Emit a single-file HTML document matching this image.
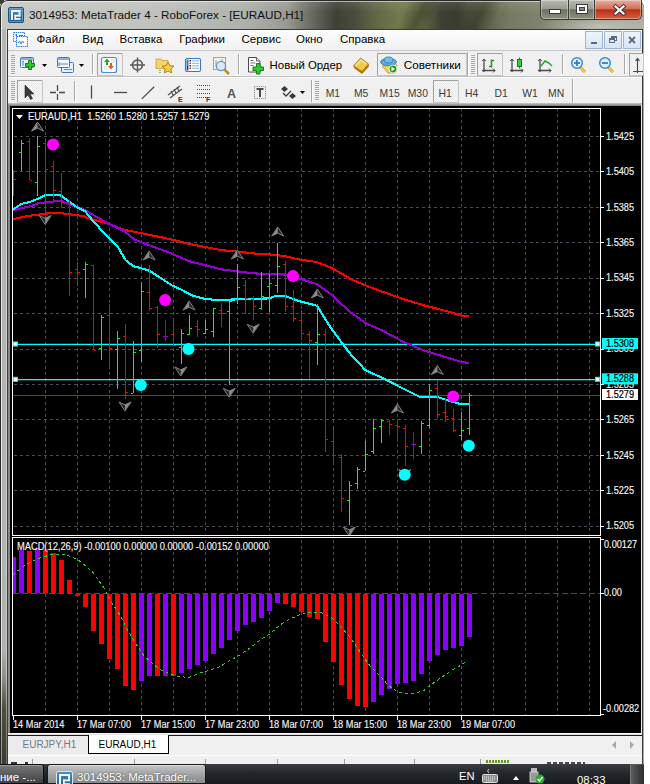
<!DOCTYPE html>
<html><head><meta charset="utf-8">
<style>
*{margin:0;padding:0;box-sizing:border-box}
html,body{width:650px;height:784px;overflow:hidden;background:#fff;font-family:"Liberation Sans",sans-serif}
.a{position:absolute}
#frame{left:0;top:0;width:644px;height:764px;border-radius:8px 8px 0 0;
 background:
  linear-gradient(rgba(255,255,255,.10),rgba(255,255,255,0) 12px),
  linear-gradient(115deg,rgba(0,0,0,0) 370px,rgba(20,22,14,.35) 385px,rgba(0,0,0,0) 398px,rgba(0,0,0,0) 425px,rgba(20,22,14,.3) 440px,rgba(0,0,0,0) 455px),
  radial-gradient(ellipse 60px 16px at 600px 26px, rgba(200,204,192,.85), rgba(200,204,192,0)),
  linear-gradient(90deg,#c6c8c4 0px,#c0c2be 150px,#b0b2ac 240px,#9a9c94 285px,#6a6c60 310px,#3e4036 335px,#484a3a 352px,#5e6444 372px,#727a4e 398px,#6a7048 418px,#3e4034 440px,#3a3c30 456px,#5a6044 482px,#767a62 508px,#80846e 540px,#8d9080 600px,#a9ac9c 644px);
 border-top:1px solid #2a2a2a;border-left:1px solid #2a2a2a}
#hl{left:1px;top:1px;width:642px;height:763px;border-radius:7px 7px 0 0;border-top:1px solid rgba(255,255,255,.55);border-left:1px solid rgba(255,255,255,.75)}
.title{left:29px;top:7.6px;font-size:11.7px;color:#101010;white-space:nowrap}
.menu{left:8px;top:30px;width:634px;height:20px;background:linear-gradient(#fcfcfc,#f1f1f1)}
.mi{position:absolute;top:2.6px;font-size:11.5px;color:#000;white-space:nowrap}
.tb{left:8px;width:634px;background:#f0f0f0}
.cap{position:absolute;top:0;height:20px;border:1px solid #383a36;border-top:none}
.mdib{position:absolute;top:31px;width:18px;height:18px;background:linear-gradient(#eef4fc,#d6e4f4);border:1px solid #9fb4cf}
</style></head><body>
<div id="frame" class="a"></div>
<div id="hl" class="a"></div>
<div class="a" style="left:0;top:0;width:4px;height:4px;background:radial-gradient(circle at 0 0,#3a4038 70%,transparent 72%)"></div>
<svg class="a" style="left:0;top:0" width="30" height="30">
 <defs><linearGradient id="ig" x1="0" y1="0" x2="0" y2="1"><stop offset="0" stop-color="#4a92c8"/><stop offset="1" stop-color="#1b5586"/></linearGradient></defs>
 <rect x="8.5" y="7.5" width="15" height="15" rx="1.5" fill="url(#ig)" stroke="#1f4f7a"/>
 <rect x="9.5" y="8.5" width="13" height="13" rx="1" fill="none" stroke="#6aa8d8" stroke-width="0.8"/>
 <g fill="#f4f8fb"><rect x="11" y="10" width="2" height="10"/><rect x="11" y="10" width="9.5" height="2"/><rect x="18.5" y="10" width="2" height="6.5"/><rect x="14.5" y="14.8" width="6" height="1.8"/><rect x="14.5" y="14.8" width="1.6" height="5"/><rect x="14.5" y="18" width="6" height="1.8"/></g>
</svg>
<div class="a title">3014953: MetaTrader 4 - RoboForex - [EURAUD,H1]</div>
<!-- caption buttons -->
<div class="cap" style="left:540px;width:29px;border-radius:0 0 0 5px;background:linear-gradient(#b6b9ae,#9a9d90 45%,#6c7062 52%,#8e937e);box-shadow:inset 0 0 0 1px rgba(255,255,255,.35)"></div>
<div class="a" style="left:549px;top:9px;width:12px;height:5px;background:#fff;border:1px solid #3a3a3a"></div>
<div class="cap" style="left:568px;width:27px;background:linear-gradient(#b6b9ae,#9a9d90 45%,#6c7062 52%,#8e937e);box-shadow:inset 0 0 0 1px rgba(255,255,255,.35)"></div>
<div class="a" style="left:576px;top:4px;width:12px;height:10px;border:1px solid #3a3a3a;background:#fff"></div>
<div class="a" style="left:579px;top:7px;width:6px;height:4px;border:1px solid #3a3a3a;background:#8a8a8a"></div>
<div class="cap" style="left:594px;width:48px;border-radius:0 0 5px 0;background:linear-gradient(#e4b0a4,#d27058 45%,#b83018 52%,#d86040);box-shadow:inset 0 0 0 1px rgba(255,255,255,.35)"></div>
<svg class="a" style="left:610px;top:3px" width="18" height="14"><path d="M5.5,3.5 L13.5,10.5 M13.5,3.5 L5.5,10.5" stroke="#3a3040" stroke-width="4" stroke-linecap="square"/><path d="M5.5,3.5 L13.5,10.5 M13.5,3.5 L5.5,10.5" stroke="#fff" stroke-width="2.2" stroke-linecap="square"/></svg>
<div class="a" style="left:1px;top:29px;width:6px;height:735px;background:linear-gradient(#b4b6b2 0,#b0b2ae 620px,#8a8d80 650px,#4a4e3a 680px,#3a3e2c 735px)"></div>
<div class="a" style="left:1px;top:29px;width:1px;height:735px;background:linear-gradient(#ececec 0,#e4e4e4 640px,#a0a298 700px,#8a8c80 735px)"></div>
<div class="a" style="left:6px;top:29px;width:1px;height:735px;background:linear-gradient(#dadada 0,#d0d0d0 640px,#8a8c80 700px,#707268 735px)"></div>
<!-- client border -->
<div class="a" style="left:7px;top:29px;width:636px;height:735px;border:1px solid #3a3a3a;border-bottom:none;background:#fff"></div>
<div class="a menu">
 <span class="mi" style="left:28.5px">Файл</span>
 <span class="mi" style="left:74.3px">Вид</span>
 <span class="mi" style="left:111.6px">Вставка</span>
 <span class="mi" style="left:171.3px">Графики</span>
 <span class="mi" style="left:233.5px">Сервис</span>
 <span class="mi" style="left:288px">Окно</span>
 <span class="mi" style="left:332px">Справка</span>
</div>
<svg class="a" style="left:10px;top:30px" width="20" height="20">
 <rect x="3.5" y="2.5" width="11" height="9" fill="#f4f8ff" stroke="#2f7ae6" stroke-dasharray="1.5,0.7"/>
 <rect x="6.5" y="6.5" width="11" height="10" fill="#fff" stroke="#2f7ae6" stroke-dasharray="1.5,0.7"/>
 <path d="M8,13 l1.5,-2 l1.5,3 l1.5,-3 l1.5,2" stroke="#2f7ae6" fill="none" stroke-width="1"/>
 <path d="M5,5.5 l1.5,-1.5 l0,3 M9,5.5 h4" stroke="#2f7ae6" stroke-width="1" fill="none"/>
</svg>
<div class="mdib" style="left:585px"></div><div class="a" style="left:591px;top:42px;width:6px;height:2px;background:#5a6a7e"></div>
<div class="mdib" style="left:604px"></div><div class="a" style="left:611px;top:36px;width:6px;height:5px;border:1px solid #5a6a7e;border-top-width:2px"></div><div class="a" style="left:609px;top:38px;width:6px;height:5px;border:1px solid #5a6a7e;border-top-width:2px;background:#dde8f5"></div>
<div class="mdib" style="left:623px"></div>
<svg class="a" style="left:623px;top:31px" width="18" height="18"><path d="M6,6 L12,12 M12,6 L6,12" stroke="#5a6a7e" stroke-width="1.8"/></svg>
<div class="a tb" style="top:50px;height:27px"></div>
<div class="a tb" style="top:77px;height:27px"></div>
<div class="a" style="left:8px;top:103px;width:634px;height:3px;background:linear-gradient(#c8c8c8,#7a7a7a)"></div>
<svg width="650" height="110" style="position:absolute;left:0;top:0"><rect x="8" y="50" width="634" height="1" fill="#c8c8c8"/><rect x="8" y="76" width="634" height="1" fill="#c0c0c0"/><rect x="8" y="77" width="634" height="1" fill="#fdfdfd"/><rect x="11" y="55" width="4" height="1" fill="#a9a9a9"/><rect x="11" y="57" width="4" height="1" fill="#a9a9a9"/><rect x="11" y="59" width="4" height="1" fill="#a9a9a9"/><rect x="11" y="61" width="4" height="1" fill="#a9a9a9"/><rect x="11" y="63" width="4" height="1" fill="#a9a9a9"/><rect x="11" y="65" width="4" height="1" fill="#a9a9a9"/><rect x="11" y="67" width="4" height="1" fill="#a9a9a9"/><rect x="11" y="69" width="4" height="1" fill="#a9a9a9"/><rect x="11" y="71" width="4" height="1" fill="#a9a9a9"/><rect x="11" y="73" width="4" height="1" fill="#a9a9a9"/><rect x="11" y="81" width="4" height="1" fill="#a9a9a9"/><rect x="11" y="83" width="4" height="1" fill="#a9a9a9"/><rect x="11" y="85" width="4" height="1" fill="#a9a9a9"/><rect x="11" y="87" width="4" height="1" fill="#a9a9a9"/><rect x="11" y="89" width="4" height="1" fill="#a9a9a9"/><rect x="11" y="91" width="4" height="1" fill="#a9a9a9"/><rect x="11" y="93" width="4" height="1" fill="#a9a9a9"/><rect x="11" y="95" width="4" height="1" fill="#a9a9a9"/><rect x="11" y="97" width="4" height="1" fill="#a9a9a9"/><rect x="11" y="99" width="4" height="1" fill="#a9a9a9"/><rect x="471" y="55" width="4" height="1" fill="#a9a9a9"/><rect x="471" y="57" width="4" height="1" fill="#a9a9a9"/><rect x="471" y="59" width="4" height="1" fill="#a9a9a9"/><rect x="471" y="61" width="4" height="1" fill="#a9a9a9"/><rect x="471" y="63" width="4" height="1" fill="#a9a9a9"/><rect x="471" y="65" width="4" height="1" fill="#a9a9a9"/><rect x="471" y="67" width="4" height="1" fill="#a9a9a9"/><rect x="471" y="69" width="4" height="1" fill="#a9a9a9"/><rect x="471" y="71" width="4" height="1" fill="#a9a9a9"/><rect x="471" y="73" width="4" height="1" fill="#a9a9a9"/><rect x="315" y="81" width="4" height="1" fill="#a9a9a9"/><rect x="315" y="83" width="4" height="1" fill="#a9a9a9"/><rect x="315" y="85" width="4" height="1" fill="#a9a9a9"/><rect x="315" y="87" width="4" height="1" fill="#a9a9a9"/><rect x="315" y="89" width="4" height="1" fill="#a9a9a9"/><rect x="315" y="91" width="4" height="1" fill="#a9a9a9"/><rect x="315" y="93" width="4" height="1" fill="#a9a9a9"/><rect x="315" y="95" width="4" height="1" fill="#a9a9a9"/><rect x="315" y="97" width="4" height="1" fill="#a9a9a9"/><rect x="315" y="99" width="4" height="1" fill="#a9a9a9"/><rect x="92" y="54" width="1" height="20" fill="#a6a6a6"/><rect x="93" y="54" width="1" height="20" fill="#fff"/><rect x="238" y="54" width="1" height="20" fill="#a6a6a6"/><rect x="239" y="54" width="1" height="20" fill="#fff"/><rect x="562" y="54" width="1" height="20" fill="#a6a6a6"/><rect x="563" y="54" width="1" height="20" fill="#fff"/><rect x="624" y="54" width="1" height="20" fill="#a6a6a6"/><rect x="625" y="54" width="1" height="20" fill="#fff"/><rect x="74" y="81" width="1" height="20" fill="#a6a6a6"/><rect x="75" y="81" width="1" height="20" fill="#fff"/><rect x="311" y="80" width="1" height="22" fill="#a6a6a6"/><rect x="312" y="80" width="1" height="22" fill="#fff"/><rect x="467" y="52" width="1" height="24" fill="#a6a6a6"/><rect x="468" y="52" width="1" height="24" fill="#fff"/><rect x="572" y="79" width="1" height="24" fill="#a6a6a6"/><rect x="573" y="79" width="1" height="24" fill="#fff"/><defs><pattern id="dith" width="2" height="2" patternUnits="userSpaceOnUse"><rect width="2" height="2" fill="#f8f8f8"/><rect width="1" height="1" fill="#e8e8e8"/><rect x="1" y="1" width="1" height="1" fill="#e8e8e8"/></pattern></defs><rect x="97.5" y="53.5" width="25" height="22" fill="url(#dith)" stroke="#c6c6c6"/><rect x="97" y="53" width="25" height="1" fill="#a0a0a0"/><rect x="97" y="53" width="1" height="22" fill="#a0a0a0"/><rect x="377.5" y="53.5" width="89" height="22" fill="url(#dith)" stroke="#c6c6c6"/><rect x="377" y="53" width="89" height="1" fill="#a0a0a0"/><rect x="377" y="53" width="1" height="22" fill="#a0a0a0"/><rect x="477.5" y="53.5" width="25" height="22" fill="url(#dith)" stroke="#c6c6c6"/><rect x="477" y="53" width="25" height="1" fill="#a0a0a0"/><rect x="477" y="53" width="1" height="22" fill="#a0a0a0"/><rect x="629.5" y="53.5" width="14" height="22" fill="url(#dith)" stroke="#c6c6c6"/><rect x="629" y="53" width="14" height="1" fill="#a0a0a0"/><rect x="629" y="53" width="1" height="22" fill="#a0a0a0"/><rect x="17.5" y="80.5" width="25" height="22" fill="url(#dith)" stroke="#c6c6c6"/><rect x="17" y="80" width="25" height="1" fill="#a0a0a0"/><rect x="17" y="80" width="1" height="22" fill="#a0a0a0"/><rect x="433.5" y="80.5" width="25" height="22" fill="url(#dith)" stroke="#c6c6c6"/><rect x="433" y="80" width="25" height="1" fill="#a0a0a0"/><rect x="433" y="80" width="1" height="22" fill="#a0a0a0"/><rect x="20.5" y="57.5" width="13" height="10" rx="1" fill="#eaf2fb" stroke="#3b78c0"/><rect x="21" y="58" width="12" height="2" fill="#7fb0e6"/><path d="M23,61 v5 M22,62 l1,-1 l1,1" stroke="#6a8aaa" fill="none"/><path d="M28.5,60.5 h3 v3 h3 v3 h-3 v3 h-3 v-3 h-3 v-3 h3 z" fill="#2fc42f" stroke="#138013" stroke-width="1"/><path d="M42,64 h5 l-2.5,3 z" fill="#000"/><rect x="61.5" y="62.5" width="12" height="10" rx="1" fill="#e6f0fa" stroke="#3b78c0"/><rect x="57.5" y="57.5" width="12" height="10" rx="1" fill="#f3f8fd" stroke="#3b78c0"/><rect x="58" y="58" width="11" height="2" fill="#7fb0e6"/><path d="M59,62 v4 M59,64 h9 M64,69.5 h8" stroke="#6a8aaa" fill="none"/><path d="M79,64 h5 l-2.5,3 z" fill="#000"/><rect x="101.5" y="57.5" width="15" height="15" rx="2" fill="#fff" stroke="#4a8ad8" stroke-width="1.2"/><path d="M104,62 l3,-3.5 l3,3.5 h-2 v3 h-2 v-3 z" fill="#21a821"/><path d="M108,66 l3,3.5 l3,-3.5 h-2 v-3 h-2 v3 z" fill="#e8552a"/><path d="M104,67 h3 M104,69 h3 M111,60 h4 M111,62 h4" stroke="#c0c8d8" stroke-width="0.8"/><circle cx="137.5" cy="65" r="5" fill="none" stroke="#5a5a5a" stroke-width="1.6"/><path d="M137.5,57.5 v15 M130,65 h15" stroke="#5a5a5a" stroke-width="1.4"/><path d="M156,59 h5 l1,1.5 h6 v8 h-12 z" fill="#f4d470" stroke="#c8a030" stroke-width="0.8"/><path d="M168,62 l1.8,3.6 4,.5 -2.9,2.8 .7,4 -3.6,-1.9 -3.6,1.9 .7,-4 -2.9,-2.8 4,-.5 z" fill="#f5cf3a" stroke="#a07820" stroke-width="0.9"/><path d="M160,70 v3" stroke="#555" stroke-dasharray="1,1"/><rect x="185.5" y="58.5" width="15" height="13" rx="1.5" fill="#fff" stroke="#3b78c0" stroke-width="1.1"/><rect x="186.5" y="59.5" width="2" height="11" fill="#3b78c0"/><rect x="187" y="66" width="1" height="4" fill="#1a3a6a"/><rect x="189.5" y="60" width="1.5" height="1.5" fill="#222"/><rect x="189.5" y="62.5" width="1.5" height="1.5" fill="#e02020"/><rect x="189.5" y="65" width="1.5" height="1.5" fill="#222"/><rect x="189.5" y="67.5" width="1.5" height="1.5" fill="#e02020"/><path d="M192,60.8 h7 M192,63.3 h7 M192,65.8 h7 M192,68.3 h7" stroke="#7aa6dc" stroke-width="0.9"/><rect x="213.5" y="57.5" width="12" height="12" fill="#f4f2ea" stroke="#a8a290"/><path d="M216,60 v7 M222,59 v6" stroke="#8a8a8a" stroke-width="0.8"/><path d="M224,69 l5,5" stroke="#b8901c" stroke-width="2.6"/><circle cx="221" cy="66" r="4.6" fill="#d6e8f6" fill-opacity="0.85" stroke="#5a9ad0" stroke-width="1.3"/><path d="M248.5,57.5 h8 l3.5,3.5 v11 h-11.5 z" fill="#fff" stroke="#4a4a4a"/><path d="M256.5,57.5 v3.5 h3.5" fill="#ddd" stroke="#4a4a4a" stroke-width="0.8"/><path d="M250.5,60.5 h3 M250.5,63 h5 M250.5,65.5 h3" stroke="#666" stroke-width="0.9"/><path d="M256.5,63.5 h3.5 v3.5 h3.5 v3.5 h-3.5 v3.5 h-3.5 v-3.5 h-3.5 v-3.5 h3.5 z" fill="#34c834" stroke="#128012" stroke-width="1"/><path d="M353.5,66 L354.5,68.5 L362,74 L369,66.5 L368.5,64 z" fill="#b07818"/><path d="M353.5,66 L360.5,58 L368.5,64 L362,71.5 z" fill="#f2c84a" stroke="#9a6a10" stroke-width="0.8"/><path d="M356,65.5 L361,60 L366,64" fill="none" stroke="#fae8a0" stroke-width="1.2"/><path d="M382,66 l6,7 h7 l2,-8 z" fill="#f0d060" stroke="#b09020" stroke-width="0.8"/><ellipse cx="388.5" cy="62" rx="8" ry="3.5" fill="#5ab0e0" stroke="#2a70a0" stroke-width="0.8"/><ellipse cx="388.5" cy="60" rx="4.5" ry="3" fill="#6cc0ee" stroke="#2a70a0" stroke-width="0.8"/><circle cx="393" cy="69" r="4" fill="#20a020" stroke="#fff" stroke-width="0.8"/><path d="M391.5,66.8 v4.4 l3.5,-2.2 z" fill="#fff"/><path d="M484,59 v13 M482,70.5 h13" stroke="#4a4a4a" stroke-width="1.3"/><path d="M482,61 l2,-2 l2,2 M493,68.5 l2,2 l-2,2" stroke="#4a4a4a" stroke-width="1" fill="none"/><path d="M491.5,59.5 v8 M489,66.5 h2.5 M492,60.5 h2" stroke="#1aa01a" stroke-width="1.6" fill="none"/><path d="M512,59 v13 M510,70.5 h13" stroke="#4a4a4a" stroke-width="1.3"/><path d="M510,61 l2,-2 l2,2 M521,68.5 l2,2 l-2,2" stroke="#4a4a4a" stroke-width="1" fill="none"/><path d="M519.5,57.5 v11" stroke="#1a801a"/><rect x="517.5" y="59.5" width="4" height="7" fill="#30d030" stroke="#108010"/><path d="M540,59 v13 M538,70.5 h13" stroke="#4a4a4a" stroke-width="1.3"/><path d="M538,61 l2,-2 l2,2 M549,68.5 l2,2 l-2,2" stroke="#4a4a4a" stroke-width="1" fill="none"/><path d="M541,66 l4,-5 l4,2 l3,3" stroke="#20a020" stroke-width="1.4" fill="none"/><path d="M580,67 l5,5" stroke="#c8a020" stroke-width="3"/><path d="M580,67 l5,5" stroke="#f0d860" stroke-width="1.2"/><circle cx="577" cy="63" r="5.3" fill="#dff0fb" stroke="#3a8ad0" stroke-width="1.5"/><path d="M574,63 h6" stroke="#3a7ac0" stroke-width="1.8"/><path d="M577,60 v6" stroke="#3a7ac0" stroke-width="1.8"/><path d="M608,67 l5,5" stroke="#c8a020" stroke-width="3"/><path d="M608,67 l5,5" stroke="#f0d860" stroke-width="1.2"/><circle cx="605" cy="63" r="5.3" fill="#dff0fb" stroke="#3a8ad0" stroke-width="1.5"/><path d="M602,63 h6" stroke="#3a7ac0" stroke-width="1.8"/><path d="M637.5,59 v14 M633,71.5 h10 M635.5,61 l2,-2.5 l2,2.5" stroke="#4a4a4a" stroke-width="1.2" fill="none"/><path d="M25,85 v13 l3,-3 l2.5,4.5 l2,-1 l-2.5,-4.5 h4 z" fill="#3a3a3a" stroke="#2a2a2a" stroke-width="0.6"/><path d="M57.5,85 v15 M50,92.5 h15" stroke="#4a4a4a" stroke-width="1.3"/><rect x="56" y="91" width="3" height="3" fill="#f0f0f0"/><path d="M91.5,85.5 v13" stroke="#4a4a4a" stroke-width="1.3"/><path d="M114,92.5 h13" stroke="#4a4a4a" stroke-width="1.3"/><path d="M141.8,98.9 L154.2,86.8" stroke="#4a4a4a" stroke-width="1.3"/><path d="M168,95 L180,86 M170,98 L182,89 M171,91 l2,4 M174,89 l2,4 M177,87 l2,4" stroke="#4a4a4a" stroke-width="1.1" fill="none"/><text x="178" y="101.5" font-family="Liberation Sans" font-weight="bold" font-size="7" fill="#333">E</text><path d="M197,85.5 h13 M197,89.5 h13 M197,93.5 h13 M197,97.5 h9" stroke="#4a4a4a" stroke-width="1" stroke-dasharray="1,1"/><text x="206" y="101.5" font-family="Liberation Sans" font-weight="bold" font-size="7" fill="#333">F</text><text x="227" y="97.5" font-family="Liberation Sans" font-weight="bold" font-size="12.5" fill="#555">A</text><rect x="254.5" y="86.5" width="11" height="12" fill="none" stroke="#6a6a6a" stroke-width="0.9" stroke-dasharray="1,1.2"/><path d="M256.5,89 h7 M260,89 v8" stroke="#4a4a4a" stroke-width="2"/><path d="M281,89 l3.5,-3 l3.5,3 l-3.5,3 z M289,96 l3.5,-3 l3.5,3 l-3.5,3 z" fill="#3a3a3a"/><path d="M283,93 l3,3 l5,-5" stroke="#3a3a3a" stroke-width="1.3" fill="none"/><path d="M300,91 h5 l-2.5,3 z" fill="#000"/><text x="269.6" y="68.8" font-family="Liberation Sans" font-size="11.4" fill="#000">Новый Ордер</text><text x="403.7" y="68.8" font-family="Liberation Sans" font-size="11.7" fill="#000">Советники</text><text transform="translate(325.7,96.9) scale(1,1)" font-family="Liberation Sans" font-size="10.4" fill="#3a3a3a">M1</text><text transform="translate(353.9,96.9) scale(1,1)" font-family="Liberation Sans" font-size="10.4" fill="#3a3a3a">M5</text><text transform="translate(379.5,96.9) scale(1,1)" font-family="Liberation Sans" font-size="10.4" fill="#3a3a3a">M15</text><text transform="translate(407.7,96.9) scale(1,1)" font-family="Liberation Sans" font-size="10.4" fill="#3a3a3a">M30</text><text transform="translate(438.59999999999997,96.9) scale(1,1)" font-family="Liberation Sans" font-size="10.4" fill="#3a3a3a">H1</text><text transform="translate(464.9,96.9) scale(1,1)" font-family="Liberation Sans" font-size="10.4" fill="#3a3a3a">H4</text><text transform="translate(494.5,96.9) scale(1,1)" font-family="Liberation Sans" font-size="10.4" fill="#3a3a3a">D1</text><text transform="translate(522.2,96.9) scale(1,1)" font-family="Liberation Sans" font-size="10.4" fill="#3a3a3a">W1</text><text transform="translate(548.0,96.9) scale(1,1)" font-family="Liberation Sans" font-size="10.4" fill="#3a3a3a">MN</text></svg>
<!-- tab bar -->
<div class="a" style="left:8px;top:733px;width:634px;height:2px;background:linear-gradient(#fff,#d8d8d8)"></div>
<div class="a" style="left:8px;top:735px;width:634px;height:20px;background:#f0f0f0"></div>
<div class="a" style="left:8px;top:735px;width:81px;height:19px;background:#ebebeb"></div>
<div class="a" style="left:22.5px;top:739px;font-size:10px;color:#6b7b8c">EURJPY,H1</div>
<div class="a" style="left:88px;top:735px;width:81px;height:19px;background:#fff;border:1px solid #000;border-top:none"></div>
<div class="a" style="left:98.5px;top:739px;font-size:10px;color:#000">EURAUD,H1</div>
<div class="a" style="left:168px;top:735px;width:474px;height:1px;background:#1a1a1a"></div><div class="a" style="left:8px;top:735px;width:80px;height:1px;background:#1a1a1a"></div>
<div class="a" style="left:612px;top:741px;width:0;height:0;border-top:4px solid transparent;border-bottom:4px solid transparent;border-right:4px solid #a8a8a8"></div>
<div class="a" style="left:630px;top:741px;width:0;height:0;border-top:4px solid transparent;border-bottom:4px solid transparent;border-left:4px solid #a8a8a8"></div>
<div class="a" style="left:8px;top:755px;width:634px;height:9px;background:#efefef;border-top:1px solid #fff"></div>
<div class="a" style="left:32px;top:759px;width:1px;height:5px;background:#a0a0a0"></div><div class="a" style="left:134px;top:759px;width:1px;height:5px;background:#a0a0a0"></div><div class="a" style="left:205px;top:759px;width:1px;height:5px;background:#a0a0a0"></div><div class="a" style="left:277px;top:759px;width:1px;height:5px;background:#a0a0a0"></div><div class="a" style="left:344px;top:759px;width:1px;height:5px;background:#a0a0a0"></div><div class="a" style="left:414px;top:759px;width:1px;height:5px;background:#a0a0a0"></div><div class="a" style="left:480px;top:759px;width:1px;height:5px;background:#a0a0a0"></div><div class="a" style="left:11px;top:762px;width:6px;height:2px;background:#333"></div><div class="a" style="left:25px;top:762px;width:3px;height:2px;background:#333"></div>
<div class="a" style="left:486px;top:760px;width:23px;height:3px;background:repeating-linear-gradient(90deg,#6a9a20 0 2px,transparent 2px 3px)"></div>
<div class="a" style="left:547px;top:762px;width:38px;height:2px;background:repeating-linear-gradient(90deg,#222 0 4px,transparent 4px 6px);opacity:.8"></div>
<!-- taskbar -->
<div class="a" style="left:0;top:764px;width:644px;height:20px;background:linear-gradient(#3a3e42,#24282c 45%,#181b1e)"></div>
<div class="a" style="left:0;top:764px;width:44px;height:20px;border:1px solid #0e0e0e;border-left:none;border-radius:0 3px 0 0;background:linear-gradient(#77797b,#5a5c5e 50%,#404244);box-shadow:inset 0 1px 0 rgba(255,255,255,.25)"></div>
<div class="a" style="left:0;top:770.5px;font-size:11.5px;color:#fff;white-space:nowrap">ние -...</div>
<div class="a" style="left:47px;top:764px;width:159px;height:20px;border:1px solid #1a1a1a;border-radius:3px 3px 0 0;background:linear-gradient(#c4c6c8,#a2a4a6 50%,#8a8c8e);box-shadow:inset 0 1px 0 rgba(255,255,255,.45)"></div>
<svg class="a" style="left:55px;top:770px" width="20" height="17">
 <rect x="1.5" y="1.5" width="16" height="16" rx="1.5" fill="url(#ig)" stroke="#d8e8f4"/>
 <g fill="#f4f8fb"><rect x="4" y="4" width="2" height="11"/><rect x="4" y="4" width="11" height="2"/><rect x="13" y="4" width="2" height="7"/><rect x="8" y="9.5" width="7" height="1.8"/><rect x="8" y="9.5" width="1.8" height="5.5"/><rect x="8" y="13.2" width="7" height="1.8"/></g>
</svg>
<div class="a" style="left:77px;top:771px;font-size:11.5px;color:#fff;white-space:nowrap;text-shadow:0 0 2px #444">3014953: MetaTrader...</div>
<div class="a" style="left:459px;top:769.5px;font-size:11.2px;color:#fff">EN</div>
<svg class="a" style="left:480px;top:768px" width="20" height="16"><path d="M9,1 q-3,2 0,4" stroke="#ccc" fill="none"/><rect x="2.5" y="6.5" width="15" height="8" rx="1" fill="#8a8e92" stroke="#ddd"/><path d="M4,9 h12 M4,11 h12 M6,13 h8" stroke="#eee" stroke-dasharray="1,1"/></svg>
<div class="a" style="left:513px;top:776px;width:0;height:0;border-left:3.5px solid transparent;border-right:3.5px solid transparent;border-bottom:4px solid #fff"></div>
<svg class="a" style="left:528px;top:766px" width="20" height="18"><rect x="3" y="2" width="6" height="4" fill="#bbb"/><rect x="2" y="6" width="8" height="10" fill="#999" stroke="#ddd" stroke-width=".8"/><circle cx="12" cy="13" r="4.5" fill="#2caa2c"/><path d="M9.5,13 l2,2 l3,-4" stroke="#fff" stroke-width="1.3" fill="none"/></svg>
<div class="a" style="left:577px;top:773.5px;font-size:11.4px;color:#fff">08:33</div>
<div class="a" style="left:630px;top:764px;width:14px;height:20px;border-left:1px solid #777;border-top:1px solid #555;background:linear-gradient(90deg,#5a5d60,#2a2c2e)"></div>
<svg width="650" height="784" style="position:absolute;left:0;top:0"><rect x="8" y="106" width="2" height="627" fill="#8a8a8a"/><rect x="10" y="106" width="631" height="627" fill="#000"/><rect x="641" y="104" width="1" height="629" fill="#e8e8e8"/><g stroke="#47505a" stroke-width="1" stroke-dasharray="3,3" shape-rendering="crispEdges"><line x1="45.5" y1="108" x2="45.5" y2="535"/><line x1="45.5" y1="540" x2="45.5" y2="715"/><line x1="77.5" y1="108" x2="77.5" y2="535"/><line x1="77.5" y1="540" x2="77.5" y2="715"/><line x1="109.5" y1="108" x2="109.5" y2="535"/><line x1="109.5" y1="540" x2="109.5" y2="715"/><line x1="141.5" y1="108" x2="141.5" y2="535"/><line x1="141.5" y1="540" x2="141.5" y2="715"/><line x1="173.5" y1="108" x2="173.5" y2="535"/><line x1="173.5" y1="540" x2="173.5" y2="715"/><line x1="205.5" y1="108" x2="205.5" y2="535"/><line x1="205.5" y1="540" x2="205.5" y2="715"/><line x1="237.5" y1="108" x2="237.5" y2="535"/><line x1="237.5" y1="540" x2="237.5" y2="715"/><line x1="269.5" y1="108" x2="269.5" y2="535"/><line x1="269.5" y1="540" x2="269.5" y2="715"/><line x1="301.5" y1="108" x2="301.5" y2="535"/><line x1="301.5" y1="540" x2="301.5" y2="715"/><line x1="333.5" y1="108" x2="333.5" y2="535"/><line x1="333.5" y1="540" x2="333.5" y2="715"/><line x1="365.5" y1="108" x2="365.5" y2="535"/><line x1="365.5" y1="540" x2="365.5" y2="715"/><line x1="397.5" y1="108" x2="397.5" y2="535"/><line x1="397.5" y1="540" x2="397.5" y2="715"/><line x1="429.5" y1="108" x2="429.5" y2="535"/><line x1="429.5" y1="540" x2="429.5" y2="715"/><line x1="461.5" y1="108" x2="461.5" y2="535"/><line x1="461.5" y1="540" x2="461.5" y2="715"/><line x1="493.5" y1="108" x2="493.5" y2="535"/><line x1="493.5" y1="540" x2="493.5" y2="715"/><line x1="525.5" y1="108" x2="525.5" y2="535"/><line x1="525.5" y1="540" x2="525.5" y2="715"/><line x1="557.5" y1="108" x2="557.5" y2="535"/><line x1="557.5" y1="540" x2="557.5" y2="715"/><line x1="589.5" y1="108" x2="589.5" y2="535"/><line x1="589.5" y1="540" x2="589.5" y2="715"/><line x1="14" y1="136.5" x2="600" y2="136.5"/><line x1="14" y1="171.5" x2="600" y2="171.5"/><line x1="14" y1="207.5" x2="600" y2="207.5"/><line x1="14" y1="242.5" x2="600" y2="242.5"/><line x1="14" y1="278.5" x2="600" y2="278.5"/><line x1="14" y1="313.5" x2="600" y2="313.5"/><line x1="14" y1="349.5" x2="600" y2="349.5"/><line x1="14" y1="384.5" x2="600" y2="384.5"/><line x1="14" y1="419.5" x2="600" y2="419.5"/><line x1="14" y1="455.5" x2="600" y2="455.5"/><line x1="14" y1="490.5" x2="600" y2="490.5"/><line x1="14" y1="526.5" x2="600" y2="526.5"/></g><line x1="13" y1="395.5" x2="600" y2="395.5" stroke="#474d55" stroke-width="1" shape-rendering="crispEdges"/><line x1="13" y1="344.3" x2="600" y2="344.3" stroke="#00ffff" stroke-width="1.35"/><rect x="13.5" y="342.0" width="4" height="4" fill="#fff" stroke="#00ffff" stroke-width="1"/><rect x="595.5" y="342.0" width="4" height="4" fill="#fff" stroke="#00ffff" stroke-width="1"/><line x1="13" y1="379.6" x2="600" y2="379.6" stroke="#00ffff" stroke-width="1.35"/><rect x="13.5" y="377.3" width="4" height="4" fill="#fff" stroke="#00ffff" stroke-width="1"/><rect x="595.5" y="377.3" width="4" height="4" fill="#fff" stroke="#00ffff" stroke-width="1"/><polyline points="13.0,219.2 21.5,217.2 29.9,215.7 45.2,213.7 55.9,212.6 69.4,214.3 83.0,216.0 90.6,219.0 105.9,222.9 124.2,229.8 140.0,232.9 170.0,239.1 189.1,243.9 204.4,246.8 221.6,250.2 236.9,251.6 254.1,253.5 269.1,254.4 284.4,256.0 297.8,259.2 316.9,262.1 330.3,267.4 340.0,272.6 350.8,279.1 365.8,285.5 383.1,292.0 404.6,299.5 426.2,306.0 447.7,311.4 461.7,315.7 469.2,315.7" fill="none" stroke="#ff0000" stroke-width="2.1" stroke-linejoin="round" shape-rendering="crispEdges"/><polyline points="13.0,210.4 21.5,208.1 29.9,206.5 37.5,203.5 45.2,202.4 60.5,200.8 69.4,204.5 83.0,209.0 93.6,215.3 109.0,223.7 124.2,231.3 135.0,239.8 150.0,245.5 170.0,252.9 189.1,261.1 204.4,265.0 221.6,269.4 236.9,271.3 254.1,273.4 284.4,274.5 301.6,279.3 316.9,284.1 330.3,293.7 340.0,302.8 350.8,312.5 365.8,323.2 383.1,330.8 404.6,342.6 426.2,351.2 447.7,357.7 461.7,362.0 469.2,363.1" fill="none" stroke="#9400d3" stroke-width="2.1" stroke-linejoin="round" shape-rendering="crispEdges"/><polyline points="13.0,209.6 21.5,203.9 29.9,201.9 37.5,198.9 45.2,195.0 60.5,195.3 69.6,201.9 77.3,207.5 85.2,211.4 92.1,219.8 105.9,235.2 118.1,247.4 125.8,260.4 133.5,266.3 141.2,268.2 149.8,271.0 160.3,277.7 171.8,285.4 181.5,289.8 192.9,295.6 204.4,298.8 215.9,300.0 236.9,299.4 254.1,298.8 269.1,298.4 274.9,296.1 286.3,296.5 299.7,301.3 316.9,305.7 330.3,327.1 341.6,342.4 351.2,354.9 365.5,370.2 378.0,375.9 390.0,381.7 400.0,387.0 419.1,396.6 437.3,397.0 445.9,399.8 459.3,403.7 469.2,404.2" fill="none" stroke="#00ffff" stroke-width="2.1" stroke-linejoin="round" shape-rendering="crispEdges"/><g shape-rendering="crispEdges" stroke-width="1"><line x1="13.5" y1="170" x2="13.5" y2="196" stroke="#ff0000"/><line x1="14" y1="179.5" x2="16" y2="179.5" stroke="#ff0000"/><line x1="21.5" y1="140" x2="21.5" y2="171" stroke="#00ff00"/><line x1="19" y1="152.5" x2="21" y2="152.5" stroke="#00ff00"/><line x1="22" y1="143.5" x2="24" y2="143.5" stroke="#00ff00"/><line x1="29.5" y1="138" x2="29.5" y2="180" stroke="#ff0000"/><line x1="27" y1="141.5" x2="29" y2="141.5" stroke="#ff0000"/><line x1="30" y1="180.5" x2="32" y2="180.5" stroke="#ff0000"/><line x1="37.5" y1="136" x2="37.5" y2="196" stroke="#00ff00"/><line x1="35" y1="182.5" x2="37" y2="182.5" stroke="#00ff00"/><line x1="38" y1="146.5" x2="40" y2="146.5" stroke="#00ff00"/><line x1="45.5" y1="141" x2="45.5" y2="213" stroke="#ff0000"/><line x1="43" y1="143.5" x2="45" y2="143.5" stroke="#ff0000"/><line x1="46" y1="169.5" x2="48" y2="169.5" stroke="#ff0000"/><line x1="53.5" y1="161" x2="53.5" y2="200" stroke="#ff0000"/><line x1="51" y1="166.5" x2="53" y2="166.5" stroke="#ff0000"/><line x1="54" y1="190.5" x2="56" y2="190.5" stroke="#ff0000"/><line x1="61.5" y1="173" x2="61.5" y2="208" stroke="#ff0000"/><line x1="59" y1="191.5" x2="61" y2="191.5" stroke="#ff0000"/><line x1="62" y1="202.5" x2="64" y2="202.5" stroke="#ff0000"/><line x1="69.5" y1="200" x2="69.5" y2="296" stroke="#ff0000"/><line x1="67" y1="202.5" x2="69" y2="202.5" stroke="#ff0000"/><line x1="70" y1="272.5" x2="72" y2="272.5" stroke="#ff0000"/><line x1="77.5" y1="262" x2="77.5" y2="286" stroke="#ff0000"/><line x1="75" y1="269.5" x2="77" y2="269.5" stroke="#ff0000"/><line x1="78" y1="272.5" x2="80" y2="272.5" stroke="#ff0000"/><line x1="85.5" y1="262" x2="85.5" y2="298" stroke="#00ff00"/><line x1="83" y1="269.5" x2="85" y2="269.5" stroke="#00ff00"/><line x1="86" y1="264.5" x2="88" y2="264.5" stroke="#00ff00"/><line x1="93.5" y1="265" x2="93.5" y2="350" stroke="#ff0000"/><line x1="91" y1="265.5" x2="93" y2="265.5" stroke="#ff0000"/><line x1="94" y1="350.5" x2="96" y2="350.5" stroke="#ff0000"/><line x1="101.5" y1="315" x2="101.5" y2="360" stroke="#00ff00"/><line x1="99" y1="348.5" x2="101" y2="348.5" stroke="#00ff00"/><line x1="102" y1="317.5" x2="104" y2="317.5" stroke="#00ff00"/><line x1="109.5" y1="304" x2="109.5" y2="367" stroke="#ff0000"/><line x1="107" y1="315.5" x2="109" y2="315.5" stroke="#ff0000"/><line x1="110" y1="348.5" x2="112" y2="348.5" stroke="#ff0000"/><line x1="117.5" y1="331" x2="117.5" y2="389" stroke="#00ff00"/><line x1="115" y1="349.5" x2="117" y2="349.5" stroke="#00ff00"/><line x1="118" y1="338.5" x2="120" y2="338.5" stroke="#00ff00"/><line x1="125.5" y1="324" x2="125.5" y2="399" stroke="#ff0000"/><line x1="123" y1="336.5" x2="125" y2="336.5" stroke="#ff0000"/><line x1="126" y1="392.5" x2="128" y2="392.5" stroke="#ff0000"/><line x1="133.5" y1="341" x2="133.5" y2="393" stroke="#00ff00"/><line x1="131" y1="393.5" x2="133" y2="393.5" stroke="#00ff00"/><line x1="134" y1="352.5" x2="136" y2="352.5" stroke="#00ff00"/><line x1="141.5" y1="282" x2="141.5" y2="362" stroke="#00ff00"/><line x1="139" y1="350.5" x2="141" y2="350.5" stroke="#00ff00"/><line x1="142" y1="291.5" x2="144" y2="291.5" stroke="#00ff00"/><line x1="149.5" y1="265" x2="149.5" y2="311" stroke="#ff0000"/><line x1="147" y1="292.5" x2="149" y2="292.5" stroke="#ff0000"/><line x1="150" y1="308.5" x2="152" y2="308.5" stroke="#ff0000"/><line x1="157.5" y1="306" x2="157.5" y2="348" stroke="#ff0000"/><line x1="155" y1="307.5" x2="157" y2="307.5" stroke="#ff0000"/><line x1="158" y1="334.5" x2="160" y2="334.5" stroke="#ff0000"/><line x1="165.5" y1="320" x2="165.5" y2="341" stroke="#9400d3"/><line x1="163" y1="336.5" x2="165" y2="336.5" stroke="#9400d3"/><line x1="166" y1="336.5" x2="168" y2="336.5" stroke="#9400d3"/><line x1="173.5" y1="320" x2="173.5" y2="346" stroke="#ff0000"/><line x1="171" y1="334.5" x2="173" y2="334.5" stroke="#ff0000"/><line x1="174" y1="345.5" x2="176" y2="345.5" stroke="#ff0000"/><line x1="181.5" y1="329" x2="181.5" y2="364" stroke="#00ff00"/><line x1="179" y1="347.5" x2="181" y2="347.5" stroke="#00ff00"/><line x1="182" y1="333.5" x2="184" y2="333.5" stroke="#00ff00"/><line x1="189.5" y1="315" x2="189.5" y2="335" stroke="#00ff00"/><line x1="187" y1="334.5" x2="189" y2="334.5" stroke="#00ff00"/><line x1="190" y1="328.5" x2="192" y2="328.5" stroke="#00ff00"/><line x1="197.5" y1="320" x2="197.5" y2="337" stroke="#ff0000"/><line x1="195" y1="326.5" x2="197" y2="326.5" stroke="#ff0000"/><line x1="198" y1="329.5" x2="200" y2="329.5" stroke="#ff0000"/><line x1="205.5" y1="320" x2="205.5" y2="334" stroke="#00ff00"/><line x1="203" y1="333.5" x2="205" y2="333.5" stroke="#00ff00"/><line x1="206" y1="329.5" x2="208" y2="329.5" stroke="#00ff00"/><line x1="213.5" y1="308" x2="213.5" y2="337" stroke="#00ff00"/><line x1="211" y1="331.5" x2="213" y2="331.5" stroke="#00ff00"/><line x1="214" y1="308.5" x2="216" y2="308.5" stroke="#00ff00"/><line x1="221.5" y1="303" x2="221.5" y2="327" stroke="#ff0000"/><line x1="219" y1="310.5" x2="221" y2="310.5" stroke="#ff0000"/><line x1="222" y1="313.5" x2="224" y2="313.5" stroke="#ff0000"/><line x1="229.5" y1="301" x2="229.5" y2="385" stroke="#00ff00"/><line x1="227" y1="311.5" x2="229" y2="311.5" stroke="#00ff00"/><line x1="230" y1="301.5" x2="232" y2="301.5" stroke="#00ff00"/><line x1="237.5" y1="264" x2="237.5" y2="304" stroke="#00ff00"/><line x1="235" y1="299.5" x2="237" y2="299.5" stroke="#00ff00"/><line x1="238" y1="287.5" x2="240" y2="287.5" stroke="#00ff00"/><line x1="245.5" y1="280" x2="245.5" y2="314" stroke="#ff0000"/><line x1="243" y1="285.5" x2="245" y2="285.5" stroke="#ff0000"/><line x1="246" y1="298.5" x2="248" y2="298.5" stroke="#ff0000"/><line x1="253.5" y1="296" x2="253.5" y2="320" stroke="#ff0000"/><line x1="251" y1="299.5" x2="253" y2="299.5" stroke="#ff0000"/><line x1="254" y1="306.5" x2="256" y2="306.5" stroke="#ff0000"/><line x1="261.5" y1="272" x2="261.5" y2="310" stroke="#00ff00"/><line x1="259" y1="308.5" x2="261" y2="308.5" stroke="#00ff00"/><line x1="262" y1="296.5" x2="264" y2="296.5" stroke="#00ff00"/><line x1="269.5" y1="274" x2="269.5" y2="312" stroke="#00ff00"/><line x1="267" y1="286.5" x2="269" y2="286.5" stroke="#00ff00"/><line x1="270" y1="283.5" x2="272" y2="283.5" stroke="#00ff00"/><line x1="277.5" y1="243" x2="277.5" y2="293" stroke="#00ff00"/><line x1="275" y1="285.5" x2="277" y2="285.5" stroke="#00ff00"/><line x1="278" y1="266.5" x2="280" y2="266.5" stroke="#00ff00"/><line x1="285.5" y1="261" x2="285.5" y2="312" stroke="#ff0000"/><line x1="283" y1="264.5" x2="285" y2="264.5" stroke="#ff0000"/><line x1="286" y1="306.5" x2="288" y2="306.5" stroke="#ff0000"/><line x1="293.5" y1="290" x2="293.5" y2="322" stroke="#ff0000"/><line x1="291" y1="306.5" x2="293" y2="306.5" stroke="#ff0000"/><line x1="294" y1="318.5" x2="296" y2="318.5" stroke="#ff0000"/><line x1="301.5" y1="310" x2="301.5" y2="340" stroke="#ff0000"/><line x1="299" y1="320.5" x2="301" y2="320.5" stroke="#ff0000"/><line x1="302" y1="333.5" x2="304" y2="333.5" stroke="#ff0000"/><line x1="309.5" y1="331" x2="309.5" y2="379" stroke="#ff0000"/><line x1="307" y1="334.5" x2="309" y2="334.5" stroke="#ff0000"/><line x1="310" y1="340.5" x2="312" y2="340.5" stroke="#ff0000"/><line x1="317.5" y1="304" x2="317.5" y2="365" stroke="#00ff00"/><line x1="315" y1="342.5" x2="317" y2="342.5" stroke="#00ff00"/><line x1="318" y1="334.5" x2="320" y2="334.5" stroke="#00ff00"/><line x1="325.5" y1="329" x2="325.5" y2="452" stroke="#ff0000"/><line x1="323" y1="334.5" x2="325" y2="334.5" stroke="#ff0000"/><line x1="326" y1="439.5" x2="328" y2="439.5" stroke="#ff0000"/><line x1="333.5" y1="426" x2="333.5" y2="465" stroke="#ff0000"/><line x1="331" y1="441.5" x2="333" y2="441.5" stroke="#ff0000"/><line x1="334" y1="455.5" x2="336" y2="455.5" stroke="#ff0000"/><line x1="341.5" y1="454" x2="341.5" y2="512" stroke="#ff0000"/><line x1="339" y1="457.5" x2="341" y2="457.5" stroke="#ff0000"/><line x1="342" y1="498.5" x2="344" y2="498.5" stroke="#ff0000"/><line x1="349.5" y1="481" x2="349.5" y2="525" stroke="#00ff00"/><line x1="347" y1="500.5" x2="349" y2="500.5" stroke="#00ff00"/><line x1="350" y1="485.5" x2="352" y2="485.5" stroke="#00ff00"/><line x1="357.5" y1="467" x2="357.5" y2="489" stroke="#00ff00"/><line x1="355" y1="483.5" x2="357" y2="483.5" stroke="#00ff00"/><line x1="358" y1="469.5" x2="360" y2="469.5" stroke="#00ff00"/><line x1="365.5" y1="441" x2="365.5" y2="471" stroke="#00ff00"/><line x1="363" y1="471.5" x2="365" y2="471.5" stroke="#00ff00"/><line x1="366" y1="454.5" x2="368" y2="454.5" stroke="#00ff00"/><line x1="373.5" y1="419" x2="373.5" y2="454" stroke="#00ff00"/><line x1="371" y1="451.5" x2="373" y2="451.5" stroke="#00ff00"/><line x1="374" y1="428.5" x2="376" y2="428.5" stroke="#00ff00"/><line x1="381.5" y1="419" x2="381.5" y2="443" stroke="#00ff00"/><line x1="379" y1="426.5" x2="381" y2="426.5" stroke="#00ff00"/><line x1="382" y1="420.5" x2="384" y2="420.5" stroke="#00ff00"/><line x1="389.5" y1="420" x2="389.5" y2="435" stroke="#ff0000"/><line x1="387" y1="421.5" x2="389" y2="421.5" stroke="#ff0000"/><line x1="390" y1="424.5" x2="392" y2="424.5" stroke="#ff0000"/><line x1="397.5" y1="419" x2="397.5" y2="442" stroke="#ff0000"/><line x1="395" y1="425.5" x2="397" y2="425.5" stroke="#ff0000"/><line x1="398" y1="426.5" x2="400" y2="426.5" stroke="#ff0000"/><line x1="405.5" y1="425" x2="405.5" y2="466" stroke="#ff0000"/><line x1="403" y1="428.5" x2="405" y2="428.5" stroke="#ff0000"/><line x1="406" y1="446.5" x2="408" y2="446.5" stroke="#ff0000"/><line x1="413.5" y1="432" x2="413.5" y2="459" stroke="#9400d3"/><line x1="411" y1="444.5" x2="413" y2="444.5" stroke="#9400d3"/><line x1="414" y1="444.5" x2="416" y2="444.5" stroke="#9400d3"/><line x1="421.5" y1="421" x2="421.5" y2="454" stroke="#00ff00"/><line x1="419" y1="446.5" x2="421" y2="446.5" stroke="#00ff00"/><line x1="422" y1="423.5" x2="424" y2="423.5" stroke="#00ff00"/><line x1="429.5" y1="384" x2="429.5" y2="428" stroke="#00ff00"/><line x1="427" y1="425.5" x2="429" y2="425.5" stroke="#00ff00"/><line x1="430" y1="390.5" x2="432" y2="390.5" stroke="#00ff00"/><line x1="437.5" y1="380" x2="437.5" y2="419" stroke="#ff0000"/><line x1="435" y1="388.5" x2="437" y2="388.5" stroke="#ff0000"/><line x1="438" y1="414.5" x2="440" y2="414.5" stroke="#ff0000"/><line x1="445.5" y1="398" x2="445.5" y2="422" stroke="#ff0000"/><line x1="443" y1="412.5" x2="445" y2="412.5" stroke="#ff0000"/><line x1="446" y1="416.5" x2="448" y2="416.5" stroke="#ff0000"/><line x1="453.5" y1="409" x2="453.5" y2="432" stroke="#ff0000"/><line x1="451" y1="418.5" x2="453" y2="418.5" stroke="#ff0000"/><line x1="454" y1="430.5" x2="456" y2="430.5" stroke="#ff0000"/><line x1="461.5" y1="412" x2="461.5" y2="440" stroke="#00ff00"/><line x1="459" y1="435.5" x2="461" y2="435.5" stroke="#00ff00"/><line x1="462" y1="430.5" x2="464" y2="430.5" stroke="#00ff00"/><line x1="469.5" y1="393" x2="469.5" y2="435" stroke="#00ff00"/><line x1="467" y1="428.5" x2="469" y2="428.5" stroke="#00ff00"/><line x1="470" y1="395.5" x2="472" y2="395.5" stroke="#00ff00"/></g><path d="M37.5,122 L43.5,131 L37.5,128.2 L31.5,131 Z" fill="#262626" stroke="#8c9096" stroke-width="0.9" stroke-linejoin="round"/><path d="M37.5,122.5 L32.3,130.6 L37.5,128.2 Z" fill="#8e8e8e"/><path d="M149.2,251 L155.2,260 L149.2,257.2 L143.2,260 Z" fill="#262626" stroke="#8c9096" stroke-width="0.9" stroke-linejoin="round"/><path d="M149.2,251.5 L144.0,259.6 L149.2,257.2 Z" fill="#8e8e8e"/><path d="M189.1,301 L195.1,310 L189.1,307.2 L183.1,310 Z" fill="#262626" stroke="#8c9096" stroke-width="0.9" stroke-linejoin="round"/><path d="M189.1,301.5 L183.9,309.6 L189.1,307.2 Z" fill="#8e8e8e"/><path d="M237.3,250 L243.3,259 L237.3,256.2 L231.3,259 Z" fill="#262626" stroke="#8c9096" stroke-width="0.9" stroke-linejoin="round"/><path d="M237.3,250.5 L232.10000000000002,258.6 L237.3,256.2 Z" fill="#8e8e8e"/><path d="M277.7,227 L283.7,236 L277.7,233.2 L271.7,236 Z" fill="#262626" stroke="#8c9096" stroke-width="0.9" stroke-linejoin="round"/><path d="M277.7,227.5 L272.5,235.6 L277.7,233.2 Z" fill="#8e8e8e"/><path d="M317.3,289 L323.3,298 L317.3,295.2 L311.3,298 Z" fill="#262626" stroke="#8c9096" stroke-width="0.9" stroke-linejoin="round"/><path d="M317.3,289.5 L312.1,297.6 L317.3,295.2 Z" fill="#8e8e8e"/><path d="M397.4,404 L403.4,413 L397.4,410.2 L391.4,413 Z" fill="#262626" stroke="#8c9096" stroke-width="0.9" stroke-linejoin="round"/><path d="M397.4,404.5 L392.2,412.6 L397.4,410.2 Z" fill="#8e8e8e"/><path d="M437.3,365.5 L443.3,374.5 L437.3,371.7 L431.3,374.5 Z" fill="#262626" stroke="#8c9096" stroke-width="0.9" stroke-linejoin="round"/><path d="M437.3,366.0 L432.1,374.1 L437.3,371.7 Z" fill="#8e8e8e"/><path d="M45.2,224.5 L51.2,215.5 L45.2,218.3 L39.2,215.5 Z" fill="#262626" stroke="#8c9096" stroke-width="0.9" stroke-linejoin="round"/><path d="M45.2,224.0 L50.400000000000006,215.9 L45.2,218.3 Z" fill="#8e8e8e"/><path d="M125,411 L131,402 L125,404.8 L119,402 Z" fill="#262626" stroke="#8c9096" stroke-width="0.9" stroke-linejoin="round"/><path d="M125,410.5 L130.2,402.4 L125,404.8 Z" fill="#8e8e8e"/><path d="M180.8,376 L186.8,367 L180.8,369.8 L174.8,367 Z" fill="#262626" stroke="#8c9096" stroke-width="0.9" stroke-linejoin="round"/><path d="M180.8,375.5 L186.0,367.4 L180.8,369.8 Z" fill="#8e8e8e"/><path d="M404.8,478.5 L410.8,469.5 L404.8,472.3 L398.8,469.5 Z" fill="#262626" stroke="#8c9096" stroke-width="0.9" stroke-linejoin="round"/><path d="M404.8,478.0 L410.0,469.9 L404.8,472.3 Z" fill="#8e8e8e"/><path d="M229.2,397.3 L235.2,388.3 L229.2,391.1 L223.2,388.3 Z" fill="#262626" stroke="#8c9096" stroke-width="0.9" stroke-linejoin="round"/><path d="M229.2,396.8 L234.39999999999998,388.7 L229.2,391.1 Z" fill="#8e8e8e"/><path d="M253.2,333.3 L259.2,324.3 L253.2,327.1 L247.2,324.3 Z" fill="#262626" stroke="#8c9096" stroke-width="0.9" stroke-linejoin="round"/><path d="M253.2,332.8 L258.4,324.7 L253.2,327.1 Z" fill="#8e8e8e"/><path d="M349.3,536 L355.3,527 L349.3,529.8 L343.3,527 Z" fill="#262626" stroke="#8c9096" stroke-width="0.9" stroke-linejoin="round"/><path d="M349.3,535.5 L354.5,527.4 L349.3,529.8 Z" fill="#8e8e8e"/><circle cx="53.1" cy="144.5" r="6" fill="#ff00ff"/><circle cx="165.1" cy="300.1" r="6" fill="#ff00ff"/><circle cx="293" cy="275.9" r="6" fill="#ff00ff"/><circle cx="453.2" cy="396.6" r="6" fill="#ff00ff"/><circle cx="140.8" cy="384.9" r="6" fill="#00ffff"/><circle cx="188.5" cy="349" r="6" fill="#00ffff"/><circle cx="404.7" cy="474.8" r="6" fill="#00ffff"/><circle cx="468.8" cy="445.7" r="6" fill="#00ffff"/><line x1="13" y1="593.5" x2="600" y2="593.5" stroke="#4a3c9c" stroke-width="1" stroke-dasharray="6,3" shape-rendering="crispEdges"/><g shape-rendering="crispEdges"><rect x="13" y="557" width="3" height="36" fill="#8b00ff"/><rect x="19" y="550" width="5" height="43" fill="#8b00ff"/><rect x="27" y="551" width="5" height="42" fill="#ff0000"/><rect x="35" y="548" width="5" height="45" fill="#8b00ff"/><rect x="43" y="549" width="5" height="44" fill="#ff0000"/><rect x="51" y="553" width="5" height="40" fill="#ff0000"/><rect x="59" y="560" width="5" height="33" fill="#ff0000"/><rect x="67" y="580" width="5" height="13" fill="#ff0000"/><rect x="75" y="594" width="5" height="2" fill="#ff0000"/><rect x="83" y="594" width="5" height="13" fill="#ff0000"/><rect x="91" y="594" width="5" height="37" fill="#ff0000"/><rect x="99" y="594" width="5" height="50" fill="#ff0000"/><rect x="107" y="594" width="5" height="65" fill="#ff0000"/><rect x="115" y="594" width="5" height="75" fill="#ff0000"/><rect x="123" y="594" width="5" height="92" fill="#ff0000"/><rect x="131" y="594" width="5" height="96" fill="#ff0000"/><rect x="139" y="594" width="5" height="87" fill="#8b00ff"/><rect x="147" y="594" width="5" height="82" fill="#8b00ff"/><rect x="155" y="594" width="5" height="82" fill="#ff0000"/><rect x="163" y="594" width="5" height="82" fill="#8b00ff"/><rect x="171" y="594" width="5" height="82" fill="#ff0000"/><rect x="179" y="594" width="5" height="79" fill="#8b00ff"/><rect x="187" y="594" width="5" height="75" fill="#8b00ff"/><rect x="195" y="594" width="5" height="71" fill="#8b00ff"/><rect x="203" y="594" width="5" height="67" fill="#8b00ff"/><rect x="211" y="594" width="5" height="60" fill="#8b00ff"/><rect x="219" y="594" width="5" height="54" fill="#8b00ff"/><rect x="227" y="594" width="5" height="46" fill="#8b00ff"/><rect x="235" y="594" width="5" height="37" fill="#8b00ff"/><rect x="243" y="594" width="5" height="31" fill="#8b00ff"/><rect x="251" y="594" width="5" height="28" fill="#8b00ff"/><rect x="259" y="594" width="5" height="24" fill="#8b00ff"/><rect x="267" y="594" width="5" height="17" fill="#8b00ff"/><rect x="275" y="594" width="5" height="9" fill="#8b00ff"/><rect x="283" y="594" width="5" height="10" fill="#ff0000"/><rect x="291" y="594" width="5" height="13" fill="#ff0000"/><rect x="299" y="594" width="5" height="18" fill="#ff0000"/><rect x="307" y="594" width="5" height="23" fill="#ff0000"/><rect x="315" y="594" width="5" height="25" fill="#ff0000"/><rect x="323" y="594" width="5" height="48" fill="#ff0000"/><rect x="331" y="594" width="5" height="68" fill="#ff0000"/><rect x="339" y="594" width="5" height="91" fill="#ff0000"/><rect x="347" y="594" width="5" height="105" fill="#ff0000"/><rect x="355" y="594" width="5" height="112" fill="#ff0000"/><rect x="363" y="594" width="5" height="113" fill="#ff0000"/><rect x="371" y="594" width="5" height="108" fill="#8b00ff"/><rect x="379" y="594" width="5" height="101" fill="#8b00ff"/><rect x="387" y="594" width="5" height="95" fill="#8b00ff"/><rect x="395" y="594" width="5" height="90" fill="#8b00ff"/><rect x="403" y="594" width="5" height="89" fill="#8b00ff"/><rect x="411" y="594" width="5" height="87" fill="#8b00ff"/><rect x="419" y="594" width="5" height="80" fill="#8b00ff"/><rect x="427" y="594" width="5" height="67" fill="#8b00ff"/><rect x="435" y="594" width="5" height="61" fill="#8b00ff"/><rect x="443" y="594" width="5" height="56" fill="#8b00ff"/><rect x="451" y="594" width="5" height="54" fill="#8b00ff"/><rect x="459" y="594" width="5" height="52" fill="#8b00ff"/><rect x="467" y="594" width="5" height="43" fill="#8b00ff"/></g><polyline points="13.0,574.6 25.4,564.9 37.7,558.8 50.0,554.9 60.8,554.2 71.5,556.5 80.8,561.8 93.1,572.6 104.0,588.0 112.0,603.0 120.0,615.0 128.0,631.0 136.0,644.0 144.0,656.0 152.0,663.0 160.0,669.6 168.0,673.0 176.0,676.4 189.0,677.4 200.0,673.0 210.0,670.0 220.0,666.6 230.0,660.6 240.0,655.0 250.0,648.0 260.0,640.0 270.0,634.0 280.0,625.0 290.0,619.0 300.0,614.6 308.0,612.0 322.0,613.0 332.0,618.0 340.0,626.0 350.0,637.0 360.0,652.0 370.0,666.0 380.0,676.0 388.0,685.0 396.0,691.0 406.0,694.0 416.0,693.0 424.0,690.3 428.2,687.0 434.9,682.0 443.2,676.2 451.5,670.4 459.8,665.9 466.0,661.3" fill="none" stroke="#2ed22e" stroke-width="1" stroke-dasharray="3,3" shape-rendering="crispEdges"/><g fill="none" stroke="#fff" stroke-width="1" shape-rendering="crispEdges"><rect x="12.5" y="108.5" width="588" height="427"/><rect x="12.5" y="537.5" width="588" height="178"/></g><g stroke="#fff" stroke-width="1" shape-rendering="crispEdges"><line x1="600" y1="136.5" x2="604" y2="136.5"/><line x1="600" y1="171.5" x2="604" y2="171.5"/><line x1="600" y1="207.5" x2="604" y2="207.5"/><line x1="600" y1="242.5" x2="604" y2="242.5"/><line x1="600" y1="278.5" x2="604" y2="278.5"/><line x1="600" y1="313.5" x2="604" y2="313.5"/><line x1="600" y1="349.5" x2="604" y2="349.5"/><line x1="600" y1="384.5" x2="604" y2="384.5"/><line x1="600" y1="419.5" x2="604" y2="419.5"/><line x1="600" y1="455.5" x2="604" y2="455.5"/><line x1="600" y1="490.5" x2="604" y2="490.5"/><line x1="600" y1="526.5" x2="604" y2="526.5"/><line x1="600" y1="539.5" x2="604" y2="539.5"/><line x1="600" y1="593.5" x2="604" y2="593.5"/><line x1="600" y1="714.5" x2="604" y2="714.5"/><line x1="13.5" y1="715" x2="13.5" y2="720"/><line x1="77.5" y1="715" x2="77.5" y2="720"/><line x1="141.5" y1="715" x2="141.5" y2="720"/><line x1="205.5" y1="715" x2="205.5" y2="720"/><line x1="269.5" y1="715" x2="269.5" y2="720"/><line x1="333.5" y1="715" x2="333.5" y2="720"/><line x1="397.5" y1="715" x2="397.5" y2="720"/><line x1="461.5" y1="715" x2="461.5" y2="720"/></g><g font-family="Liberation Sans" font-size="10.2" fill="#f4f4f4" stroke="#f4f4f4" stroke-width="0.15"><text transform="translate(606.0,139.6) scale(0.9,1)">1.5425</text><text transform="translate(606.0,175.0) scale(0.9,1)">1.5405</text><text transform="translate(606.0,210.5) scale(0.9,1)">1.5385</text><text transform="translate(606.0,245.9) scale(0.9,1)">1.5365</text><text transform="translate(606.0,281.3) scale(0.9,1)">1.5345</text><text transform="translate(606.0,316.8) scale(0.9,1)">1.5325</text><text transform="translate(606.0,352.2) scale(0.9,1)">1.5305</text><text transform="translate(606.0,387.6) scale(0.9,1)">1.5285</text><text transform="translate(606.0,423.0) scale(0.9,1)">1.5265</text><text transform="translate(606.0,458.5) scale(0.9,1)">1.5245</text><text transform="translate(606.0,493.9) scale(0.9,1)">1.5225</text><text transform="translate(606.0,529.3) scale(0.9,1)">1.5205</text><text transform="translate(604.0,547.9) scale(0.9,1)">0.00127</text><text transform="translate(604.0,595.9) scale(0.9,1)">0.00</text><text transform="translate(603.0,711.6) scale(0.9,1)">-0.00282</text><text transform="translate(13.0,728.3) scale(0.9,1)">14 Mar 2014</text><text transform="translate(77.0,728.3) scale(0.9,1)">17 Mar 07:00</text><text transform="translate(141.0,728.3) scale(0.9,1)">17 Mar 15:00</text><text transform="translate(205.0,728.3) scale(0.9,1)">17 Mar 23:00</text><text transform="translate(269.0,728.3) scale(0.9,1)">18 Mar 07:00</text><text transform="translate(333.0,728.3) scale(0.9,1)">18 Mar 15:00</text><text transform="translate(397.0,728.3) scale(0.9,1)">18 Mar 23:00</text><text transform="translate(461.0,728.3) scale(0.9,1)">19 Mar 07:00</text><rect x="13" y="111" width="199" height="11" fill="#000" stroke="none"/><text transform="translate(28.0,119.8) scale(0.918,1)">EURAUD,H1&#160; 1.5260 1.5280 1.5257 1.5279</text><text transform="translate(17.0,550.0) scale(0.913,1)">MACD(12,26,9) -0.00100 0.00000 0.00000 -0.00152 0.00000</text></g><rect x="602" y="338.0" width="36" height="11" fill="#00ffff"/><text transform="translate(606,347.1) scale(0.9,1)" font-family="Liberation Sans" font-size="10.2" fill="#000" stroke="#000" stroke-width="0.2">1.5308</text><rect x="602" y="373.3" width="36" height="11" fill="#00ffff"/><text transform="translate(606,382.4) scale(0.9,1)" font-family="Liberation Sans" font-size="10.2" fill="#000" stroke="#000" stroke-width="0.2">1.5288</text><rect x="602" y="389.0" width="36" height="11" fill="#ffffff"/><text transform="translate(606,398.1) scale(0.9,1)" font-family="Liberation Sans" font-size="10.2" fill="#000" stroke="#000" stroke-width="0.2">1.5279</text><path d="M16,115 L23,115 L19.5,119 Z" fill="#fff"/></svg>
</body></html>
